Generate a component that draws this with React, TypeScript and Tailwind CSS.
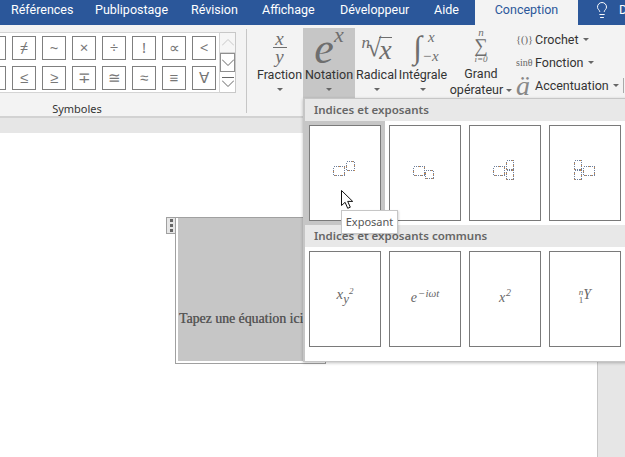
import { Lightbulb } from "lucide-react";

const tabs = [
  { label: "Références", w: "w-[84px]" },
  { label: "Publipostage", w: "w-[96px]" },
  { label: "Révision", w: "w-[71px]" },
  { label: "Affichage", w: "w-[78px]" },
  { label: "Développeur", w: "w-[94px]" },
  { label: "Aide", w: "w-[52px]" },
];

const row1 = ["", "≠", "~", "×", "÷", "!", "∝", "<"];
const row2 = ["", "≤", "≥", "∓", "≅", "≈", "≡", "∀"];

const roboto = { fontFamily: "Roboto, sans-serif" };
const serif = { fontFamily: "'Liberation Serif', serif" };

function Caret({ className = "" }: { className?: string }) {
  return <span className={`inline-block h-0 w-0 border-x-[3px] border-t-[3px] border-x-transparent border-t-[#666] ${className}`} />;
}

function Dots({ x, y, w, h }: { x: number; y: number; w: number; h: number }) {
  return (
    <g shapeRendering="crispEdges">
      <rect x={x} y={y} width={w} height={h} fill="none" stroke="#6d7f9c" strokeDasharray="1 1" />
      <rect x={x} y={y} width={w} height={h} fill="none" stroke="#d08a45" strokeDasharray="1 5" strokeDashoffset="1" />
    </g>
  );
}

function Placeholder({ kind }: { kind: number }) {
  return (
    <svg width="24" height="24" viewBox="0 0 24 24" className="-mt-[6px] block">
      {kind === 0 && (
        <>
          <Dots x={0.5} y={8.5} w={11} h={9} />
          <Dots x={13.5} y={3.5} w={8} h={9} />
        </>
      )}
      {kind === 1 && (
        <>
          <Dots x={0.5} y={8.5} w={11} h={9} />
          <Dots x={12.5} y={12.5} w={8} h={8} />
        </>
      )}
      {kind === 2 && (
        <>
          <Dots x={0.5} y={8.5} w={11} h={9} />
          <Dots x={13.5} y={2.5} w={7} h={9} />
          <Dots x={13.5} y={12.5} w={7} h={9} />
        </>
      )}
      {kind === 3 && (
        <>
          <Dots x={10.5} y={8.5} w={11} h={9} />
          <Dots x={1.5} y={2.5} w={7} h={9} />
          <Dots x={1.5} y={12.5} w={7} h={9} />
        </>
      )}
    </svg>
  );
}

function BigButton({ w, active, label, icon }: { w: string; active?: boolean; label: string; icon: React.ReactNode }) {
  return (
    <div className={`flex h-[70px] shrink-0 flex-col items-center ${w} ${active ? "bg-[#c6c6c6]" : ""}`}>
      <div className="flex h-[38px] w-full items-center justify-center text-[#6e6e6e]" style={serif}>
        {icon}
      </div>
      <span className="text-[12.5px] leading-[18px] text-[#333]" style={roboto}>
        {label}
      </span>
      <Caret className="mt-[4px]" />
    </div>
  );
}

function Cell({ children, hot }: { children: React.ReactNode; hot?: boolean }) {
  return (
    <div className={`flex h-[96px] w-[72px] items-center justify-center border border-[#7a7a7a] bg-white ${hot ? "outline-[4px] outline-[#c6c6c6]" : ""}`}>
      {children}
    </div>
  );
}

function Formula({ children }: { children: React.ReactNode }) {
  return (
    <span className="-mt-[6px] flex items-start text-[12px] italic leading-none text-[#666]" style={serif}>
      {children}
    </span>
  );
}

export default function App() {
  return (
    <div className="relative h-[457px] w-[625px] overflow-hidden bg-white" style={{ fontFamily: "'Noto Sans', sans-serif" }}>
      {/* onglets */}
      <div className="flex h-[25px] bg-[#2b579a] text-[12.5px] leading-[20px] text-white" style={roboto}>
        {tabs.map((t) => (
          <span key={t.label} className={`${t.w} shrink-0 pl-[11px]`}>
            {t.label}
          </span>
        ))}
        <span className="h-full w-[103px] shrink-0 bg-[#f3f3f3] text-center text-[#2b579a]">Conception</span>
        <Lightbulb size={18} strokeWidth={1.3} className="ml-[15px] mt-[1px] shrink-0" />
        <span className="ml-[8px]">D</span>
      </div>

      {/* ruban */}
      <div className="flex h-[93px] border-b-2 border-[#d2d2d2] bg-[#f3f3f3] pt-[3px]">
        <div className="-ml-[19px] flex w-[265px] shrink-0 flex-col">
          <div className="mt-[4px] flex">
            <div className="flex h-[61px] w-[239px] flex-col justify-center gap-[6px] border border-[#d4d4d4] bg-white">
              {[row1, row2].map((row, r) => (
                <div key={r} className="flex gap-[6px]">
                  {row.map((s, i) => (
                    <span
                      key={i}
                      className="flex h-[24px] w-[24px] items-center justify-center border border-[#7f7f7f] bg-white text-[15px] leading-none text-[#777]"
                    >
                      {s}
                    </span>
                  ))}
                </div>
              ))}
            </div>
            <div className="flex h-[61px] w-[16px] flex-col border border-l-0 border-[#c8c8c8] bg-white text-[#888]">
              <span className="flex h-[20px] items-center justify-center border-b border-[#d4d4d4] bg-[#f6f6f6]">
                <svg width="12" height="7" viewBox="0 0 12 7" fill="none" stroke="#c8c8c8">
                  <path d="M0 6.5 6 .5l6 6" />
                </svg>
              </span>
              <span className="flex h-[19px] items-center justify-center border border-[#8f8f8f] bg-white">
                <svg width="12" height="7" viewBox="0 0 12 7" fill="none" stroke="#666">
                  <path d="M0 .5l6 6 6-6" />
                </svg>
              </span>
              <span className="flex h-[20px] flex-col items-center justify-center gap-[2px]">
                <span className="h-px w-[12px] bg-[#666]" />
                <svg width="12" height="7" viewBox="0 0 12 7" fill="none" stroke="#666">
                  <path d="M0 .5l6 6 6-6" />
                </svg>
              </span>
            </div>
          </div>
          <span className="mt-[8px] w-[192px] text-center text-[11px] leading-[16px] text-[#333]">Symboles</span>
        </div>
        <div className="mt-[1px] h-[84px] w-px shrink-0 bg-[#c6c6c6]" />
        <div className="ml-[9px] flex">
          <BigButton
            w="w-[47px]"
            label="Fraction"
            icon={
              <span className="flex flex-col items-center text-[19px] italic leading-[17px]">
                <span>x</span>
                <span className="h-px w-[14px] bg-[#6e6e6e]" />
                <span>y</span>
              </span>
            }
          />
          <BigButton
            w="w-[52px]"
            active
            label="Notation"
            icon={
              <span className="flex items-start italic leading-none">
                <span className="mt-[4px] text-[44px] leading-none">e</span>
                <span className="mt-[1px] text-[22px] leading-none">x</span>
              </span>
            }
          />
          <BigButton
            w="w-[43px]"
            label="Radical"
            icon={
              <span className="flex items-start italic leading-none">
                <span className="mt-[1px] text-[17px]">n</span>
                <span className="-ml-[3px] mt-[2px] text-[26px] not-italic leading-none">√</span>
                <span className="-ml-[2px] mt-[4px] border-t border-[#6e6e6e] text-[28px] leading-[24px]">x</span>
              </span>
            }
          />
          <BigButton
            w="w-[50px]"
            label="Intégrale"
            icon={
              <span className="flex items-center italic leading-none">
                <span className="ml-[6px] text-[32px] not-italic leading-none">∫</span>
                <span className="flex flex-col text-[15px] leading-[19px]">
                  <span className="pl-[6px]">x</span>
                  <span>−x</span>
                </span>
              </span>
            }
          />
          <div className="flex h-[70px] w-[66px] shrink-0 flex-col items-center text-[12.5px] text-[#333]" style={roboto}>
            <div className="flex h-[38px] flex-col items-center text-[#6e6e6e]" style={serif}>
              <span className="text-[11px] italic leading-[9px]">n</span>
              <span className="text-[19px] leading-[18px]">∑</span>
              <span className="text-[9px] italic leading-[9px]">i=0</span>
            </div>
            <span className="mt-[2px] leading-[16px]">Grand</span>
            <span className="whitespace-nowrap leading-[16px]">
              opérateur <Caret className="mb-[2px]" />
            </span>
          </div>
          <div className="ml-[2px] mt-[2px] flex flex-col gap-[4px] text-[12.5px] leading-[19px] text-[#333]" style={roboto}>
            <div className="flex items-center">
              <span className="w-[19px] whitespace-nowrap text-[10.5px] text-[#666]" style={serif}>
                {"{()}"}
              </span>
              <span className="whitespace-nowrap">Crochet</span>
              <Caret className="ml-[4px]" />
            </div>
            <div className="flex items-center">
              <span className="w-[19px] whitespace-nowrap text-[10px] text-[#666]" style={serif}>
                sinθ
              </span>
              <span className="whitespace-nowrap">Fonction</span>
              <Caret className="ml-[4px]" />
            </div>
            <div className="flex items-center">
              <span className="w-[19px] text-[28px] italic leading-[19px] text-[#888]" style={serif}>
                ä
              </span>
              <span className="whitespace-nowrap">Accentuation</span>
              <Caret className="ml-[4px]" />
            </div>
          </div>
        </div>
        <div className="ml-auto mr-px mt-[50px] h-[15px] w-px shrink-0 bg-[#aaa]" />
      </div>
      <div className="h-[15px] bg-[#e6e6e6]" />

      {/* document */}
      <div className="flex h-[324px]">
        <div className="min-w-0 flex-1 pl-[166px] pt-[84px]">
          <div className="flex items-start">
            <div className="flex h-[17px] w-[10px] flex-col items-center justify-center gap-[2px] border border-[#a0a0a0] bg-[#e6e6e6]">
              <span className="h-[3px] w-[3px] bg-[#666]" />
              <span className="h-[3px] w-[3px] bg-[#666]" />
              <span className="h-[3px] w-[3px] bg-[#666]" />
            </div>
            <div className="-ml-px h-[147px] w-[151px] border border-[#a0a0a0] bg-white pb-[2px] pl-[2px]">
              <div className="flex h-full items-end bg-[#c6c6c6] pb-[33px] pl-[1px]">
                <span className="whitespace-nowrap text-[13.8px] leading-[18px] text-[#555] [text-shadow:0.3px_0_0_#666]" style={serif}>
                  Tapez une équation ici
                </span>
              </div>
            </div>
          </div>
        </div>
        <div className="w-[28px] shrink-0 border-l border-[#c6c6c6] bg-[#e6e6e6]" />
      </div>

      {/* menu Notation */}
      <div className="absolute left-[303px] top-[98px] h-[264px] w-[330px] border-y border-l-2 border-[#c6c6c6] bg-white shadow-[0_1px_3px_rgba(0,0,0,0.25)]">
        <div className="flex h-[22px] items-center bg-[#e8e8e8] pl-[9px] text-[11.5px] font-semibold text-[#666]">Indices et exposants</div>
        <div className="flex gap-[8px] px-[4px] pt-[4px]">
          {[0, 1, 2, 3].map((k) => (
            <Cell key={k} hot={k === 0}>
              <Placeholder kind={k} />
            </Cell>
          ))}
        </div>
        <div className="mt-[4px] flex h-[22px] items-center bg-[#e8e8e8] pl-[9px] text-[11.5px] font-semibold text-[#666]">Indices et exposants communs</div>
        <div className="flex gap-[8px] px-[4px] pt-[4px]">
          <Cell>
            <Formula>
              <span className="text-[15px]">x</span>
              <span className="mt-[5px] text-[13px]">y</span>
              <span className="text-[9px]">2</span>
            </Formula>
          </Cell>
          <Cell>
            <Formula>
              <span className="mt-[3px] text-[14px]">e</span>
              <span className="ml-[1px] text-[11px]">−iωt</span>
            </Formula>
          </Cell>
          <Cell>
            <Formula>
              <span className="mt-[3px] text-[14px]">x</span>
              <span className="ml-[1px] text-[10px]">2</span>
            </Formula>
          </Cell>
          <Cell>
            <Formula>
              <span className="flex flex-col items-center text-[9px] leading-[8px]">
                <span>n</span>
                <span className="not-italic">1</span>
              </span>
              <span className="text-[14px]">Y</span>
            </Formula>
          </Cell>
        </div>
      </div>

      {/* curseur + info-bulle */}
      <svg className="absolute left-[341px] top-[190px]" width="13" height="20" viewBox="0 0 13 20">
        <path d="M.5.5v15l3.6-3.2 2.6 6 2.6-1.1-2.6-5.8h5z" fill="#fff" stroke="#111" />
      </svg>
      <div className="absolute left-[341px] top-[210px] flex h-[24px] w-[57px] items-center justify-center border border-[#c6c6c6] bg-white text-[11px] text-[#555] shadow-[1px_1px_2px_rgba(0,0,0,0.15)]">
        Exposant
      </div>
    </div>
  );
}
